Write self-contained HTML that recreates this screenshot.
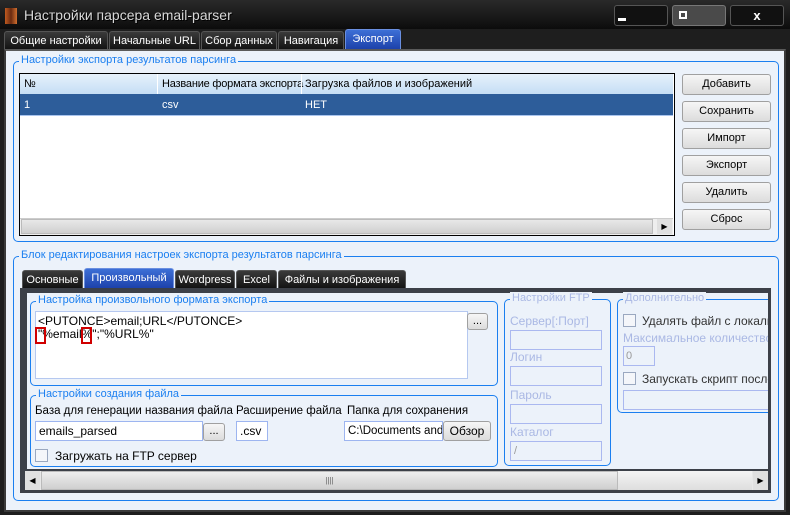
<!DOCTYPE html>
<html><head><meta charset="utf-8"><style>
*{box-sizing:border-box;margin:0;padding:0}
body{width:790px;height:515px;background:#1e1e1e;font-family:"Liberation Sans",sans-serif;font-size:11px;position:relative;overflow:hidden;color:#000}
.a{position:absolute;white-space:nowrap}
.tab{position:absolute;height:19px;background:linear-gradient(#3a3a3a,#111);color:#fff;border:1px solid #555;border-bottom:none;border-radius:3px 3px 0 0;text-align:center;line-height:18px;font-size:11px;white-space:nowrap;overflow:hidden}
.tab.on{background:linear-gradient(#3d6fd6,#1b3fa8);border-color:#6a8fe0}
.grp{position:absolute;border:1px solid #1b7ff0;border-radius:5px}
.gt{position:absolute;top:-8px;left:5px;background:#ecf2fa;color:#1b7ff0;padding:0 2px;font-size:11px;white-space:nowrap}
.btn{position:absolute;border:1px solid #a0a0a0;border-radius:3px;background:linear-gradient(#f6f6f6,#dcdcdc);text-align:center;line-height:18px;font-size:11px}
.inp{position:absolute;background:#fff;border:1px solid #9db5f0;height:20px;line-height:18px;padding-left:3px;white-space:nowrap;overflow:hidden}
.dis{color:#aab8e4}
.dinp{position:absolute;border:1px solid #aab8f0;background:#ecf2fa;height:20px}
.cb{position:absolute;width:13px;height:13px;border:1px solid #9aa8c0;background:#f4f6fa}
</style></head><body>
<div class="a" style="left:0;top:0;width:790px;height:29px;background:linear-gradient(#2a2a2a,#0c0c0c)"></div>
<div class="a" style="left:5px;top:8px;width:12px;height:16px;background:linear-gradient(90deg,#c05a20,#6a2a10,#d07030)"></div>
<div class="a" style="left:24px;top:7px;color:#d8d8d8;font-size:14px;text-shadow:1px 1px 0 #000">Настройки парсера email-parser</div>
<div class="a" style="left:614px;top:5px;width:54px;height:21px;background:#111;border:1px solid #555;border-radius:3px"><div class="a" style="left:3px;top:12px;width:8px;height:3px;background:#fff"></div></div>
<div class="a" style="left:672px;top:5px;width:54px;height:21px;background:#4a4a4a;border:1px solid #777;border-radius:3px"><div class="a" style="left:6px;top:5px;width:8px;height:8px;border:2px solid #fff"></div></div>
<div class="a" style="left:730px;top:5px;width:54px;height:21px;background:#111;border:1px solid #555;border-radius:3px;color:#fff;font-weight:bold;font-size:13px;line-height:19px;text-align:center">x</div>
<div class="tab" style="left:4px;top:31px;width:104px">Общие настройки</div>
<div class="tab" style="left:109px;top:31px;width:91px">Начальные URL</div>
<div class="tab" style="left:201px;top:31px;width:76px">Сбор данных</div>
<div class="tab" style="left:278px;top:31px;width:66px">Навигация</div>
<div class="tab on" style="left:345px;top:29px;width:56px;height:21px">Экспорт</div>
<div class="a" style="left:4px;top:49px;width:782px;height:463px;background:#ecf2fa;border:2px solid #3a3a3a;border-top-color:#5a5a5a"></div>
<div class="grp" style="left:13px;top:61px;width:766px;height:181px"><div class="gt">Настройки экспорта результатов парсинга</div></div>
<div class="a" style="left:19px;top:73px;width:656px;height:163px;background:#fff;border:1px solid #000"></div>
<div class="a" style="left:20px;top:74px;width:653px;height:20px;background:linear-gradient(#e6f1fb,#c5def5)"></div>
<div class="a" style="left:24px;top:78px">№</div>
<div class="a" style="left:157px;top:74px;width:1px;height:20px;background:#fff"></div>
<div class="a" style="left:162px;top:78px;letter-spacing:-0.2px">Название формата экспорта</div>
<div class="a" style="left:301px;top:74px;width:1px;height:20px;background:#fff"></div>
<div class="a" style="left:305px;top:78px">Загрузка файлов и изображений</div>
<div class="a" style="left:20px;top:94px;width:653px;height:22px;background:#2d5d9a;border-bottom:1px solid #a9c4ee"></div>
<div class="a" style="left:24px;top:99px;color:#fff">1</div>
<div class="a" style="left:162px;top:99px;color:#fff">csv</div>
<div class="a" style="left:305px;top:99px;color:#fff">НЕТ</div>
<div class="a" style="left:20px;top:218px;width:653px;height:17px;background:#eee;border-top:1px solid #ccc"></div>
<div class="a" style="left:21px;top:219px;width:632px;height:15px;background:linear-gradient(#e8e8e8,#cfcfcf);border:1px solid #bbb"></div>
<div class="a" style="left:657px;top:219px;width:15px;height:15px;background:#e0e0e0;font-size:8px;line-height:15px;text-align:center">▶</div>
<div class="btn" style="left:682px;top:74px;width:89px;height:21px">Добавить</div>
<div class="btn" style="left:682px;top:101px;width:89px;height:21px">Сохранить</div>
<div class="btn" style="left:682px;top:128px;width:89px;height:21px">Импорт</div>
<div class="btn" style="left:682px;top:155px;width:89px;height:21px">Экспорт</div>
<div class="btn" style="left:682px;top:182px;width:89px;height:21px">Удалить</div>
<div class="btn" style="left:682px;top:209px;width:89px;height:21px">Сброс</div>
<div class="grp" style="left:13px;top:256px;width:766px;height:245px"><div class="gt">Блок редактирования настроек экспорта результатов парсинга</div></div>
<div class="tab" style="left:22px;top:270px;width:61px">Основные</div>
<div class="tab on" style="left:84px;top:268px;width:90px;height:21px">Произвольный</div>
<div class="tab" style="left:175px;top:270px;width:60px">Wordpress</div>
<div class="tab" style="left:236px;top:270px;width:41px">Excel</div>
<div class="tab" style="left:278px;top:270px;width:128px">Файлы и изображения</div>
<div class="a" style="left:20px;top:288px;width:751px;height:205px;background:#3c4048"></div>
<div class="a" style="left:27px;top:293px;width:741px;height:176px;background:#ecf2fa"></div>
<div class="grp" style="left:30px;top:301px;width:468px;height:85px"><div class="gt">Настройка произвольного формата экспорта</div></div>
<div class="a" style="left:35px;top:311px;width:433px;height:68px;background:#fff;border:1px solid #b5c8f0;padding:3px 2px;font-size:12px;line-height:13px">&lt;PUTONCE&gt;email;URL&lt;/PUTONCE&gt;<br>"%email%";"%URL%"</div>
<div class="a" style="left:35px;top:327px;width:11px;height:17px;border:2px solid #d00000"></div>
<div class="a" style="left:81px;top:327px;width:11px;height:17px;border:2px solid #d00000"></div>
<div class="btn" style="left:467px;top:313px;width:21px;height:17px;line-height:14px">...</div>
<div class="grp" style="left:30px;top:395px;width:468px;height:72px"><div class="gt">Настройки создания файла</div></div>
<div class="a" style="left:35px;top:405px;font-size:11.5px">База для генерации названия файла</div>
<div class="a" style="left:236px;top:405px;font-size:11.5px">Расширение файла</div>
<div class="a" style="left:347px;top:405px;font-size:11.5px">Папка для сохранения</div>
<div class="inp" style="left:35px;top:421px;width:168px;font-size:12px">emails_parsed</div>
<div class="btn" style="left:203px;top:423px;width:22px;height:18px;line-height:14px">...</div>
<div class="inp" style="left:236px;top:421px;width:32px;font-size:12px">.csv</div>
<div class="inp" style="left:344px;top:421px;width:99px;font-size:11.5px">C:\Documents and</div>
<div class="btn" style="left:443px;top:421px;width:48px;height:20px;font-size:12px">Обзор</div>
<div class="cb" style="left:35px;top:449px"></div>
<div class="a" style="left:55px;top:449px;font-size:12px">Загружать на FTP сервер</div>
<div class="grp" style="left:504px;top:299px;width:107px;height:167px;border-color:#1b7ff0"><div class="gt dis">Настройки FTP</div></div>
<div class="a dis" style="left:510px;top:314px;font-size:12px">Сервер[:Порт]</div>
<div class="dinp" style="left:510px;top:330px;width:92px"></div>
<div class="a dis" style="left:510px;top:350px;font-size:12px">Логин</div>
<div class="dinp" style="left:510px;top:366px;width:92px"></div>
<div class="a dis" style="left:510px;top:388px;font-size:12px">Пароль</div>
<div class="dinp" style="left:510px;top:404px;width:92px"></div>
<div class="a dis" style="left:510px;top:425px;font-size:12px">Каталог</div>
<div class="dinp" style="left:510px;top:441px;width:92px;color:#999;padding-left:3px;line-height:18px">/</div>
<div class="a" style="left:612px;top:289px;width:156px;height:180px;overflow:hidden">
<div class="grp" style="left:5px;top:10px;width:170px;height:114px"><div class="gt dis">Дополнительно</div></div>
<div class="cb" style="left:11px;top:25px"></div>
<div class="a" style="left:30px;top:25px;font-size:12px;color:#333">Удалять файл с локальн</div>
<div class="a dis" style="left:11px;top:42px;font-size:12px">Максимальное количество н</div>
<div class="dinp" style="left:11px;top:57px;width:32px;color:#999;padding-left:2px;line-height:18px">0</div>
<div class="cb" style="left:11px;top:83px"></div>
<div class="a" style="left:30px;top:83px;font-size:12px;color:#333">Запускать скрипт после</div>
<div class="dinp" style="left:11px;top:101px;width:160px"></div>
</div>
<div class="a" style="left:25px;top:471px;width:743px;height:19px;background:#e8e8e8"></div>
<div class="a" style="left:25px;top:471px;width:15px;height:19px;background:#e0e0e0;font-size:8px;line-height:19px;text-align:center">◀</div>
<div class="a" style="left:41px;top:471px;width:577px;height:19px;background:linear-gradient(#eee,#cfcfcf);border:1px solid #bbb;text-align:center;font-size:8px;line-height:17px;color:#666">||||</div>
<div class="a" style="left:618px;top:471px;width:134px;height:19px;background:linear-gradient(#f4f4f4,#dedede)"></div>
<div class="a" style="left:753px;top:471px;width:15px;height:19px;background:#e0e0e0;font-size:8px;line-height:19px;text-align:center">▶</div>
</body></html>
